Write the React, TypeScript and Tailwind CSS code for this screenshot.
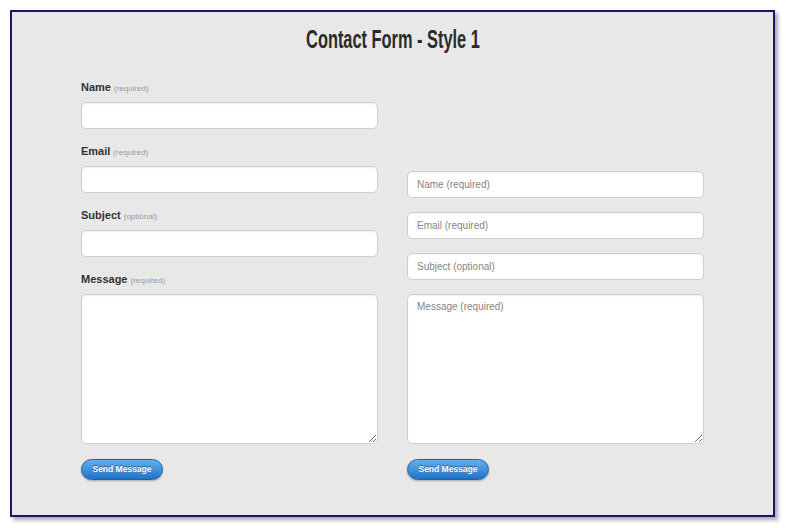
import React from "react";

const fieldClass =
  "block w-full h-[27px] rounded-[5px] border border-[#cfcfcf] bg-white px-[9px] text-[10px] text-[#555] placeholder:text-[#858585] shadow-[inset_0_1px_2px_rgba(0,0,0,0.06)] outline-none";

const areaClass =
  "block w-full h-[150px] rounded-[5px] border border-[#cfcfcf] bg-white px-[9px] py-[4px] text-[10px] text-[#555] placeholder:text-[#858585] shadow-[inset_0_1px_2px_rgba(0,0,0,0.06)] outline-none";

function SendButton() {
  return (
    <button
      type="button"
      className="mt-[15px] h-[21px] w-[82px] rounded-full border border-[#1d62ad] bg-gradient-to-b from-[#63b0ee] to-[#1f72c4] text-[8.5px] font-bold text-white [text-shadow:0_-1px_0_rgba(0,0,0,0.45)] shadow-[0_1px_2px_rgba(0,0,0,0.3)]"
    >
      Send Message
    </button>
  );
}

function Label({ name, note }: { name: string; note: string }) {
  return (
    <div className="mb-[7px] h-[14px] flex items-baseline leading-[12px]">
      <span className="text-[11px] font-bold text-[#333]">{name}</span>
      <span className="ml-[3px] text-[8px] text-[#999]">({note})</span>
    </div>
  );
}

export default function App() {
  return (
    <div className="w-[786px] h-[528px] bg-white pl-[10px] pt-[10px] font-['Liberation_Sans',Arial,sans-serif]">
      <div className="w-[765px] h-[507px] border-2 border-[#17176e] bg-[#e8e8e8] shadow-[3px_3px_4px_rgba(60,60,80,0.45)] px-[69px] pt-[13px]">
        <div className="flex justify-center h-[28px]">
          <h1 className="inline-block text-[26px] leading-[28px] font-bold text-[#2b2b2b] scale-x-[0.63] whitespace-nowrap">
            Contact Form - Style 1
          </h1>
        </div>

        <div className="mt-[28px] grid grid-cols-2 gap-x-[29px] items-end">
          <form className="flex flex-col items-start">
            <Label name="Name" note="required" />
            <input className={fieldClass} />
            <div className="h-[16px]" />
            <Label name="Email" note="required" />
            <input className={fieldClass} />
            <div className="h-[16px]" />
            <Label name="Subject" note="optional" />
            <input className={fieldClass} />
            <div className="h-[16px]" />
            <Label name="Message" note="required" />
            <textarea className={areaClass} />
            <SendButton />
          </form>

          <form className="flex flex-col items-start gap-[14px]">
            <input className={fieldClass} placeholder="Name (required)" />
            <input className={fieldClass} placeholder="Email (required)" />
            <input className={fieldClass} placeholder="Subject (optional)" />
            <div className="w-full">
              <textarea className={areaClass} placeholder="Message (required)" />
              <SendButton />
            </div>
          </form>
        </div>
      </div>
    </div>
  );
}
